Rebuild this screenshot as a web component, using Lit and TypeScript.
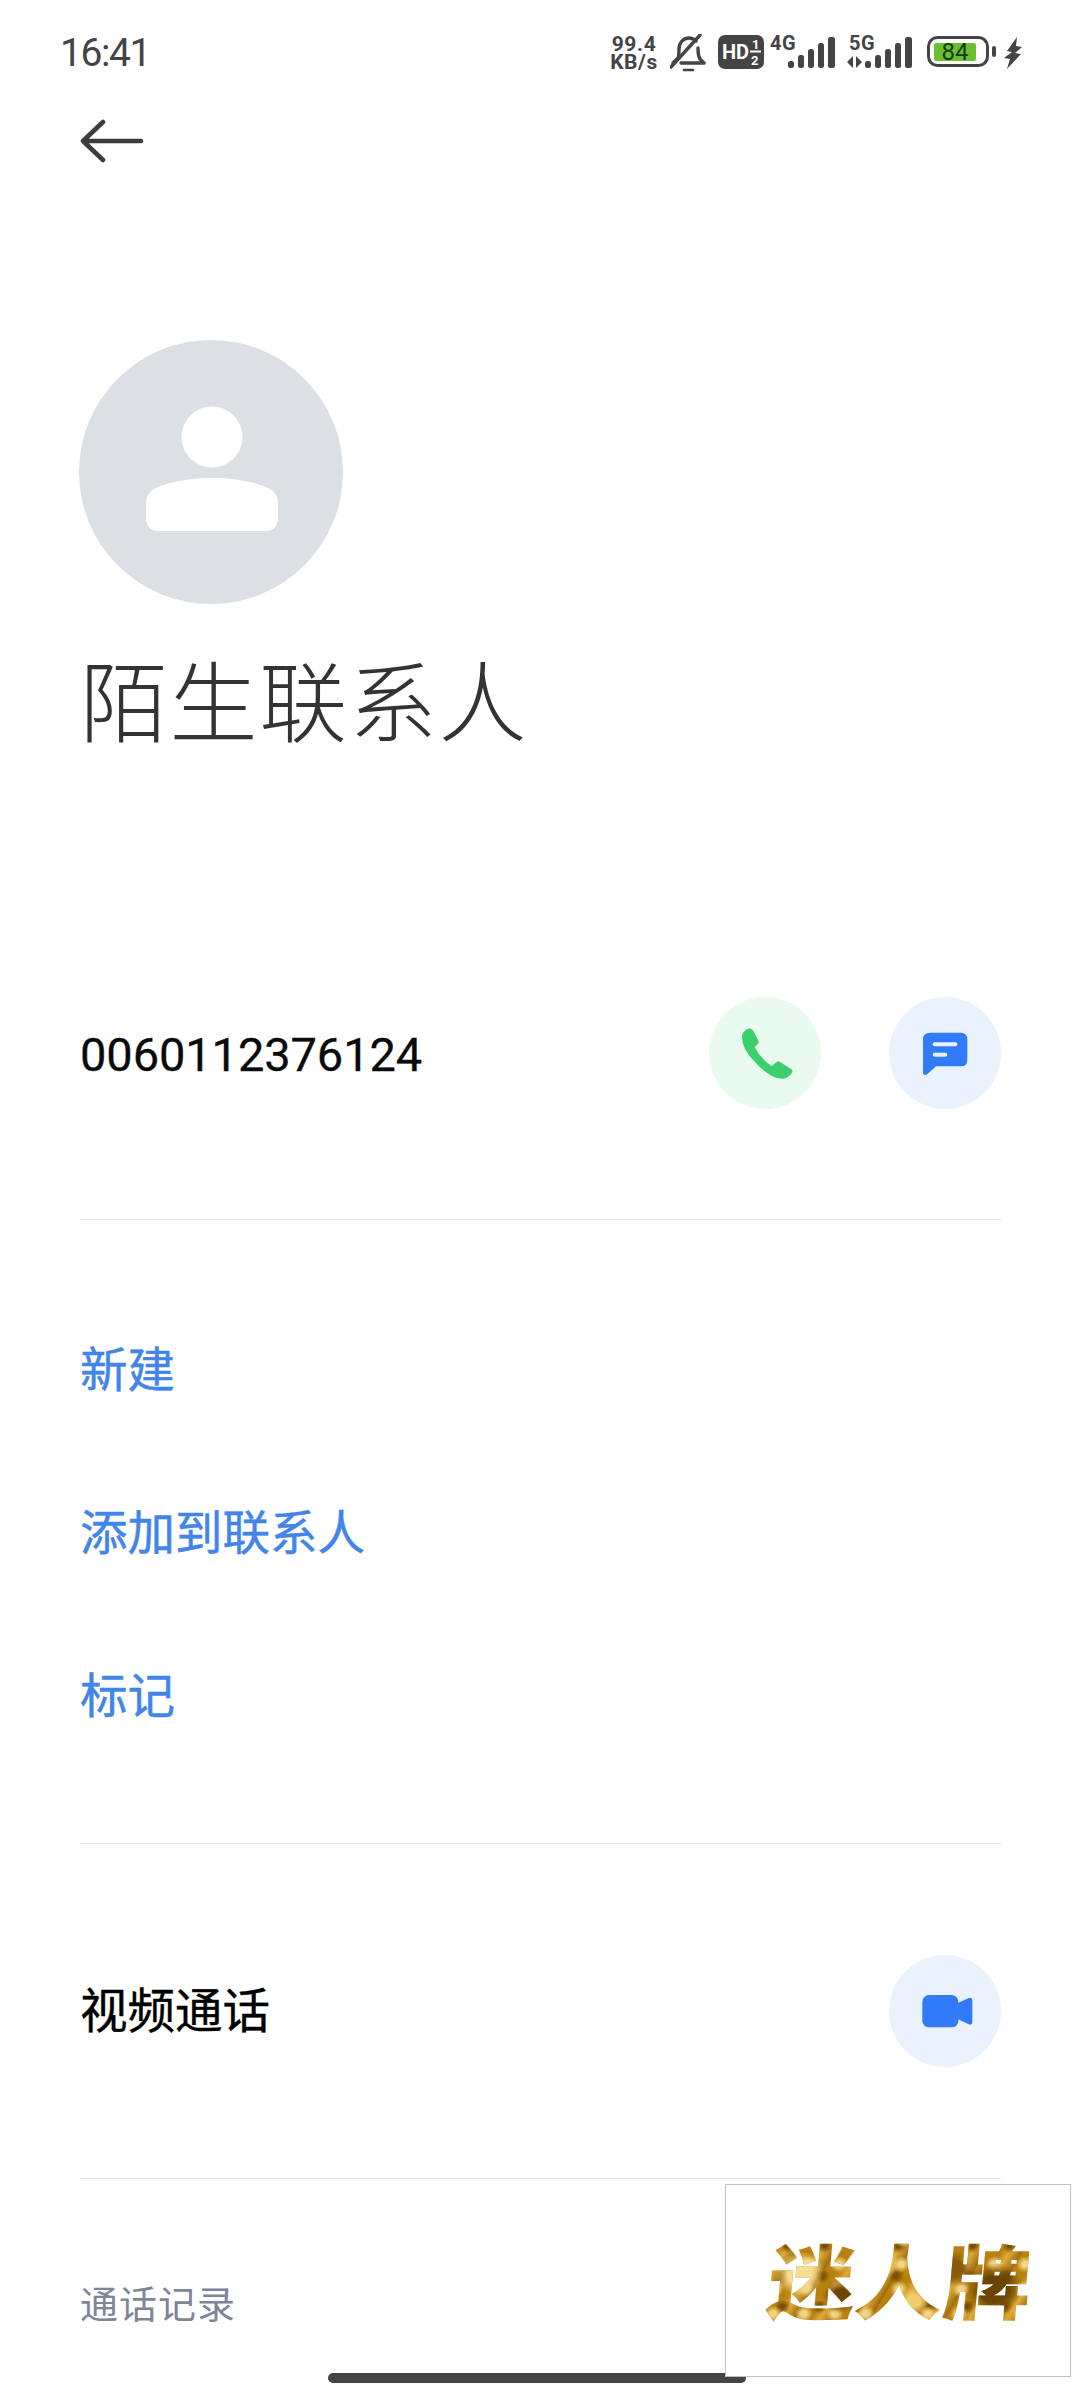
import { LitElement, html, css, svg } from "lit";
import { customElement } from "lit/decorators.js";

const bars = svg`
  <rect x="0" y="24" width="6" height="7" rx="2.5"/><rect x="10" y="18" width="6" height="13" rx="2.5"/>
  <rect x="20" y="12" width="6" height="19" rx="2.5"/><rect x="30" y="6" width="6" height="25" rx="2.5"/>
  <rect x="40" y="0" width="7" height="31" rx="2.5"/>`;

@customElement("app-root")
export class AppRoot extends LitElement {
  static styles = css`
    :host {
      display: block; position: relative; width: 1080px; height: 2400px; overflow: hidden;
      background: #fff; color: #000;
      font-family: "Noto Sans CJK SC", Roboto, sans-serif;
    }
    svg { display: block; flex: none; }
    .status { height: 76px; display: flex; align-items: flex-end; padding: 0 58px 0 60px; box-sizing: border-box; }
    .time { font: 400 39px/44px Roboto, sans-serif; color: #444; letter-spacing: -1.4px; flex: 1; margin-bottom: 1px; }
    .speed { width: 52px; margin: 0 10px 5px 0; font: 700 21px/18px Roboto, sans-serif; color: #444; text-align: center; letter-spacing: .6px; white-space: nowrap; }
    .bell { margin: 0 12px 4px 0; }
    .hd { margin: 0 6px 7px 0; }
    .net4 { margin: 0 10px 8px 0; }
    .net5 { margin: 0 15px 8px 0; }
    .batt { margin: 0 7px 8px 0; }
    .bolt { margin-bottom: 7px; }
    .nav { height: 134px; padding: 0 0 4px 80px; box-sizing: border-box; display: flex; align-items: center; }
    .main { padding: 0 79px 0 80px; }
    .avatar { margin: 130px 0 0 -1px; width: 264px; height: 264px; border-radius: 50%; background: #dcdfe4; display: flex; align-items: center; justify-content: center; }
    .title { margin-top: 33px; font-size: 88px; line-height: 120px; font-weight: 300; color: #333; letter-spacing: 1.6px; }
    .row { display: flex; align-items: center; }
    .num-row { margin-top: 240px; }
    .num { flex: 1; font: 400 47px/60px Roboto, sans-serif; color: #0a0a0a; padding-top: 4px; letter-spacing: -.1px; -webkit-text-stroke: .3px #0a0a0a; }
    .circle { width: 112px; height: 112px; border-radius: 50%; flex: none; }
    .green { background: #e9faef; margin-right: 68px; }
    .blue { background: #e9f2fd; }
    .divider { height: 1px; background: #e6e6e6; }
    .d1 { margin-top: 110px; }
    .links { padding-top: 68px; margin-bottom: 66px; }
    .link { height: 163px; font-size: 47.5px; line-height: 157px; color: #4285e8; -webkit-text-stroke: .5px #4285e8; }
    .video-row { margin: 111px 0; }
    .video-label { flex: 1; font-size: 47.5px; line-height: 60px; color: #000; padding-bottom: 6px; -webkit-text-stroke: .4px #000; }
    .log { margin-top: 93px; font-size: 38px; line-height: 60px; color: #7f8599; letter-spacing: 1px; }
    .home { margin: 41px 0 0 328px; width: 418px; height: 10px; border-radius: 5px; background: #454545; }
    .mark {
      position: absolute; left: 725px; top: 2184px; width: 346px; height: 193px; box-sizing: border-box;
      border: 1px solid #c2c2c2; background: #fff; display: flex; align-items: center; justify-content: center;
    }
    .gold {
      font-size: 88px; line-height: 100px; font-weight: 900; transform: skewX(-5deg) scaleY(.92);
      margin: -6px 0 0 5px; color: transparent;
      background:
        radial-gradient(circle at 12% 45%, #f7dd92 0 5%, transparent 10%),
        radial-gradient(circle at 28% 70%, #6f4606 0 4%, transparent 9%),
        radial-gradient(circle at 42% 35%, #f4d27a 0 5%, transparent 11%),
        radial-gradient(circle at 56% 75%, #f0cd70 0 4%, transparent 9%),
        radial-gradient(circle at 70% 40%, #8a5a0c 0 5%, transparent 10%),
        radial-gradient(circle at 86% 62%, #6a4306 0 6%, transparent 12%),
        radial-gradient(circle at 8px 8px, #f3d482 0 3px, transparent 9px) 0 0 / 31px 27px,
        radial-gradient(circle at 6px 6px, #7a4e08 0 2px, transparent 8px) 11px 9px / 37px 33px,
        repeating-linear-gradient(115deg, #b9810f 0 14px, #e0ac3a 22px, #9a6a0c 34px);
      -webkit-background-clip: text; background-clip: text;
    }
  `;

  render() {
    return html`
      <div class="status">
        <div class="time">16:41</div>
        <div class="speed">99.4<br />KB/s</div>
        <div class="bell">
          <svg width="36" height="38" viewBox="0 0 36 38" fill="none" stroke="#444" stroke-width="3.4" stroke-linecap="round" stroke-linejoin="round">
            <path d="M3 29l5-5c1-2 1-5 1-9 0-6 4-11 10-11 3 0 5 1 7 3M28 14c0 5 0 8 2 11l4 4H11"/>
            <path d="M1 33 L30 1"/><path d="M14 36h9" stroke-width="2.6"/>
          </svg>
        </div>
        <div class="hd">
          <svg width="46" height="34" viewBox="0 0 46 34">
            <rect width="46" height="34" rx="7" fill="#444"/>
            <text x="4" y="24" font-family="Roboto" font-weight="700" font-size="20" fill="#fff">HD</text>
            <text x="34" y="14" font-family="Roboto" font-weight="700" font-size="13" fill="#fff">1</text>
            <rect x="32" y="15.5" width="11" height="2" fill="#fff"/>
            <text x="33" y="30" font-family="Roboto" font-weight="700" font-size="13" fill="#fff">2</text>
          </svg>
        </div>
        <div class="net4">
          <svg width="66" height="36" viewBox="0 0 66 36" fill="#444">
            <text x="0" y="18" font-family="Roboto" font-weight="700" font-size="20" letter-spacing=".6">4G</text>
            <g transform="translate(18 5)">${bars}</g>
          </svg>
        </div>
        <div class="net5">
          <svg width="66" height="36" viewBox="0 0 66 36" fill="#444">
            <text x="3" y="18" font-family="Roboto" font-weight="700" font-size="20" letter-spacing=".6">5G</text>
            <path d="M7 24v12l-6-6zM10 24l6 6-6 6z"/>
            <g transform="translate(19 5)">${bars}</g>
          </svg>
        </div>
        <div class="batt">
          <svg width="70" height="32" viewBox="0 0 70 32">
            <rect x="1.5" y="1.5" width="59" height="28" rx="9" fill="none" stroke="#444" stroke-width="3"/>
            <rect x="7" y="7" width="42" height="18" rx="2" fill="#6cc030"/>
            <text x="28" y="24" text-anchor="middle" font-family="Roboto" font-size="24" fill="#123d10">84</text>
            <rect x="65" y="10" width="4" height="11" rx="2" fill="#444"/>
          </svg>
        </div>
        <div class="bolt">
          <svg width="18" height="32" viewBox="0 0 18 32" fill="#444"><path d="M13 0 3 14l5 1-8 6 6 1-3 10L17 17l-6-1 7-6-6-1z"/></svg>
        </div>
      </div>

      <div class="nav">
        <svg width="64" height="44" viewBox="0 0 64 44" fill="none" stroke="#3c3c3c" stroke-width="4.6" stroke-linecap="round" stroke-linejoin="round">
          <path d="M61 22H4M23 3 3 22l20 19"/>
        </svg>
      </div>

      <div class="main">
        <div class="avatar">
          <svg width="264" height="264" viewBox="0 0 264 264" fill="#fff">
            <circle cx="133" cy="97" r="30.5"/>
            <path d="M67 163c0-8 4-12 10-15 16-7 36-10 56-10s40 3 56 10c6 3 10 7 10 15v15c0 7-4 13-12 13H79c-8 0-12-6-12-13z"/>
          </svg>
        </div>
        <div class="title">陌生联系人</div>

        <div class="row num-row">
          <div class="num">0060112376124</div>
          <div class="circle green">
            <svg width="112" height="112" viewBox="87 80 336 336" fill="#3bd06c">
              <path d="M205 175Q215 172 220 182L236 213Q238 219 232 222L224 231Q240 262 275 288L290 275Q295 271 300 275L333 296Q340 300 336 307Q325 325 305 325Q270 325 225 275Q185 235 186 198Q188 182 205 175Z"/>
            </svg>
          </div>
          <div class="circle blue">
            <svg width="112" height="112" viewBox="627 80 336 336">
              <path fill="#317bf8" d="M750 187H842Q862 187 862 207V268Q862 288 842 288H768L742 312Q729 318 729 305V207Q729 187 750 187Z"/>
              <rect x="758" y="216" width="74" height="12" rx="6" fill="#e9f2fd"/>
              <rect x="758" y="247" width="44" height="12" rx="6" fill="#e9f2fd"/>
            </svg>
          </div>
        </div>

        <div class="divider d1"></div>
        <div class="links">
          <div class="link">新建</div>
          <div class="link">添加到联系人</div>
          <div class="link">标记</div>
        </div>
        <div class="divider"></div>

        <div class="row video-row">
          <div class="video-label">视频通话</div>
          <div class="circle blue">
            <svg width="112" height="112" viewBox="627 105 336 336" fill="#317bf8">
              <rect x="727" y="225" width="108" height="97" rx="20"/>
              <path d="M828 252L866 234Q877 230 877 241V306Q877 317 866 313L828 295Z"/>
            </svg>
          </div>
        </div>
        <div class="divider"></div>
        <div class="log">通话记录</div>
      </div>
      <div class="home"></div>

      <div class="mark"><div class="gold">迷人牌</div></div>
    `;
  }
}
